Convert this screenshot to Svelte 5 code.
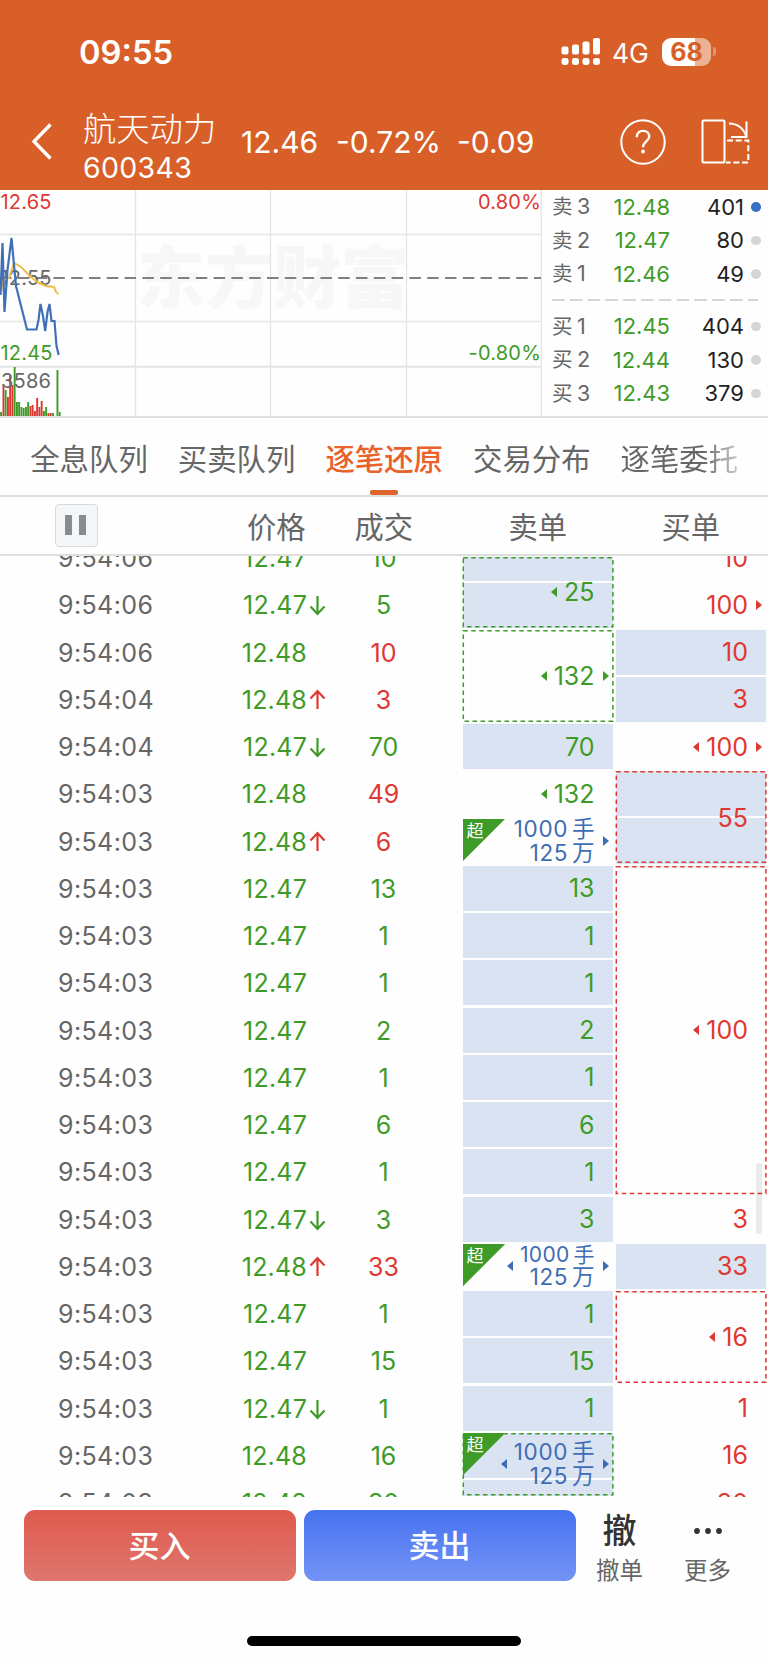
<script>
  const asks = [
    { name: "卖3", price: "12.48", vol: 401, hot: true },
    { name: "卖2", price: "12.47", vol: 80 },
    { name: "卖1", price: "12.46", vol: 49 },
  ];
  const bids = [
    { name: "买1", price: "12.45", vol: 404 },
    { name: "买2", price: "12.44", vol: 130 },
    { name: "买3", price: "12.43", vol: 379 },
  ];

  const tabs = ["全息队列", "买卖队列", "逐笔还原", "交易分布", "逐笔委托"];
  let active = 2;
  let paused = false;

  // time, price, direction, volume, side
  const ticks = [
    ["9:54:06", "12.47", "", 10, "s"],
    ["9:54:06", "12.47", "down", 5, "s"],
    ["9:54:06", "12.48", "", 10, "b"],
    ["9:54:04", "12.48", "up", 3, "b"],
    ["9:54:04", "12.47", "down", 70, "s"],
    ["9:54:03", "12.48", "", 49, "b"],
    ["9:54:03", "12.48", "up", 6, "b"],
    ["9:54:03", "12.47", "", 13, "s"],
    ["9:54:03", "12.47", "", 1, "s"],
    ["9:54:03", "12.47", "", 1, "s"],
    ["9:54:03", "12.47", "", 2, "s"],
    ["9:54:03", "12.47", "", 1, "s"],
    ["9:54:03", "12.47", "", 6, "s"],
    ["9:54:03", "12.47", "", 1, "s"],
    ["9:54:03", "12.47", "down", 3, "s"],
    ["9:54:03", "12.48", "up", 33, "b"],
    ["9:54:03", "12.47", "", 1, "s"],
    ["9:54:03", "12.47", "", 15, "s"],
    ["9:54:03", "12.47", "down", 1, "s"],
    ["9:54:03", "12.48", "", 16, "s"],
    ["9:54:03", "12.48", "", 30, "s"],
  ];

  // an order may span several ticks; l / r mark that it continues before / after
  const sells = [
    { span: 2, text: 25, fill: true, box: true, l: true, cut: "top" },
    { span: 2, text: 132, box: true, l: true, r: true },
    { span: 1, text: 70, fill: true },
    { span: 1, text: 132, l: true },
    { span: 1, big: true, r: true },
    { span: 1, text: 13, fill: true },
    { span: 1, text: 1, fill: true },
    { span: 1, text: 1, fill: true },
    { span: 1, text: 2, fill: true },
    { span: 1, text: 1, fill: true },
    { span: 1, text: 6, fill: true },
    { span: 1, text: 1, fill: true },
    { span: 1, text: 3, fill: true },
    { span: 1, big: true, l: true, r: true, tight: true },
    { span: 1, text: 1, fill: true },
    { span: 1, text: 15, fill: true },
    { span: 1, text: 1, fill: true },
    { span: 2, big: true, fill: true, box: true, l: true, r: true, cut: "bottom" },
  ];
  const buys = [
    { span: 1, text: 10 },
    { span: 1, text: 100, r: true },
    { span: 1, text: 10, fill: true },
    { span: 1, text: 3, fill: true },
    { span: 1, text: 100, l: true, r: true },
    { span: 2, text: 55, fill: true, box: true },
    { span: 7, text: 100, box: true, l: true },
    { span: 1, text: 3 },
    { span: 1, text: 33, fill: true },
    { span: 2, text: 16, box: true, l: true },
    { span: 1, text: 1 },
    { span: 1, text: 16 },
    { span: 1, text: 30 },
  ];

  const bars = [
    [1, 4, "s"], [3.4, 31, "b"], [5.6, 26, "s"], [7.9, 19, "b"], [10.1, 40, "b"],
    [12.4, 31, "b"], [14.6, 49, "s"], [16.9, 14, "s"], [19.1, 14, "s"], [21.4, 9, "s"],
    [23.6, 8, "s"], [25.9, 9, "s"], [28.1, 14, "s"], [30.4, 10, "b"], [32.6, 11, "b"],
    [34.9, 5, "b"], [37.1, 18, "b"], [39.4, 9, "b"], [41.6, 15, "b"], [43.9, 5, "s"],
    [46.1, 9, "s"], [48.4, 3, "b"], [50.6, 3, "b"], [52.9, 3, "s"], [57.4, 46, "s"], [59.6, 4, "s"],
  ];
</script>

<div class="phone">
  <header>
    <div class="status">
      <span class="clock">09:55</span>
      <svg class="signal" width="40" height="28" viewBox="0 0 40 28" fill="#fff">
        <rect x="0.5" y="8.5" width="7" height="8" rx="2" />
        <rect x="11" y="6.5" width="7" height="10" rx="2" />
        <rect x="21.5" y="3.5" width="7" height="13" rx="2" />
        <rect x="32" y="0" width="7" height="16.5" rx="2" />
        <rect x="0.5" y="20" width="7" height="7" rx="2.4" />
        <rect x="11" y="20" width="7" height="7" rx="2.4" />
        <rect x="21.5" y="20" width="7" height="7" rx="2.4" />
        <rect x="32" y="20" width="7" height="7" rx="2.4" />
      </svg>
      <span class="net">4G</span>
      <span class="battery">68</span>
      <i class="nub"></i>
    </div>
    <div class="nav">
      <svg class="back" width="24" height="40" viewBox="0 0 24 40" fill="none" stroke="#fff" stroke-width="3.4">
        <path d="M20.500 2.500 4 19.500l16.500 17" />
      </svg>
      <div class="stock">
        <div class="name">航天动力</div>
        <div class="code">600343</div>
      </div>
      <span class="q1">12.46</span>
      <span class="q2">-0.72%</span>
      <span class="q3">-0.09</span>
      <svg class="help" width="48" height="48" viewBox="0 0 48 48" fill="none" stroke="#fff" stroke-width="2">
        <circle cx="24" cy="24" r="21.700" />
        <path d="M17.700 19.200c0-3.900 2.600-6.300 6.300-6.300s6.200 2.200 6.200 5.500c0 4.900-6.200 5-6.200 10.800" stroke-width="2.400" />
        <circle cx="24" cy="33.500" r="1.900" fill="#fff" stroke="none" />
      </svg>
      <svg class="rotate" width="50" height="46" viewBox="0 0 50 46" fill="none" stroke="#fff" stroke-width="2">
        <rect x="1.500" y="1.500" width="22" height="42" rx="1" />
        <path d="M28 4.500c8.500 0 15 5 17 12.500M45.500 2.500v15.500H30" />
        <path d="M26 21.500h21.300v22H25" stroke-dasharray="6 2.700" />
      </svg>
    </div>
  </header>

  <section class="quote">
    <svg class="chart" width="542" height="228" viewBox="0 190 542 228">
      <text class="mark" x="137" y="303">东方财富</text>
      <g stroke="#e3e5e8" stroke-width="1.300" fill="none">
        <path d="M135.500 190v227M270.500 190v227M406.500 190v227M541.300 190v227" />
        <path d="M0 234.500h541M0 321.500h541" />
        <path d="M0 366.800h541" stroke-width="2" />
      </g>
      <path d="M0 278H541" stroke="#808080" stroke-width="1.800" stroke-dasharray="11.500 6.300" />
      {#each bars as [x, h, side]}
        <rect x={x - 0.9} y={416 - h} width="1.900" height={h} fill={side === "b" ? "#df3832" : "#3f9b28"} />
      {/each}
      <g class="labels">
        <text x="0.500" y="284.500">12.55</text>
        <text x="1" y="388">3586</text>
        <text x="0.500" y="208.500" fill="#df3832">12.65</text>
        <text x="0.500" y="359.500" fill="#3f9b28">12.45</text>
        <text x="541" y="208.500" fill="#df3832" text-anchor="end">0.80%</text>
        <text x="541" y="359.500" fill="#3f9b28" text-anchor="end">-0.80%</text>
      </g>
      <path d="M1 292 3 280 9 278 14 263 21 267 32 278 39 283 46 286 54 287 56 292 58.500 294" fill="none" stroke="#eebd45" stroke-width="2" />
      <path d="M0.500 295 2.500 243 4.500 312 7.500 270 11.500 238 14.500 270 16 286 27 329.500H36.500L38.500 320 40.500 304 43 316 45.200 331 47.500 312 49.500 304 51.500 321H54.500L56.500 346 58.700 355" fill="none" stroke="#4070b8" stroke-width="2.200" />
    </svg>
    <div class="book">
      {#each asks as o}
        <div class="level">
          <span class="lv">{o.name[0]}<b>{o.name[1]}</b></span><span class="pr">{o.price}</span><span class="vol">{o.vol}</span><i class:hot={o.hot}></i>
        </div>
      {/each}
      <svg class="split" width="206" height="2"><path d="M0 1h206" stroke="#d6d6d6" stroke-width="2" stroke-dasharray="12.500 5.300" /></svg>
      {#each bids as o}
        <div class="level">
          <span class="lv">{o.name[0]}<b>{o.name[1]}</b></span><span class="pr">{o.price}</span><span class="vol">{o.vol}</span><i></i>
        </div>
      {/each}
    </div>
  </section>

  <nav class="tabs">
    {#each tabs as tab, i}
      <button class:active={active === i} on:click={() => (active = i)}>{tab}</button>
    {/each}
  </nav>

  <div class="thead">
    <button class="pause" aria-label="暂停" on:click={() => (paused = !paused)}><i></i><i></i></button>
    <span class="h1">价格</span>
    <span class="h2">成交</span>
    <span class="h3">卖单</span>
    <span class="h4">买单</span>
  </div>

  <div class="list">
    <div class="ticks">
      {#each ticks as [time, price, dir, vol, side]}
        <div class="tick">
          <span class="time">{time}</span>
          <span class="price">{price}</span>
          <span class="dir">
            {#if dir}
              <svg class={dir} width="17" height="22" viewBox="0 0 17 22" fill="none" stroke-width="2.200">
                <path d="M8.500 2v18M1.500 9.500 8.500 2l7 7.500" />
              </svg>
            {/if}
          </span>
          <span class="qty {side}">{vol}</span>
        </div>
      {/each}
    </div>
    {#each [sells, buys] as orders, c}
      <div class="orders {c ? 'b' : 's'}">
        {#each orders as o}
          <div class="cell {o.cut ?? ''}" class:fill={o.fill} style="grid-row: span {o.span}">
            {#if o.big}<span class="super"><em>超</em></span>{/if}
            {#if o.box}
              <svg class="frame" width="100%" height="100%">
                <rect x="0.300" y="0.700" width="149.600" height="100%" fill="none" />
              </svg>
            {/if}
            {#if o.l}<i class="left" class:blue={o.big}></i>{/if}
            {#if o.big}
              <span class="big" class:tight={o.tight}><span>1000<u>手</u></span><span>125<u>万</u></span></span>
            {:else}
              <span class="num">{o.text}</span>
            {/if}
            <i class="right" class:blue={o.big} class:off={!o.r}></i>
          </div>
        {/each}
      </div>
    {/each}
    <div class="scroll"></div>
  </div>

  <footer>
    <button class="buy">买入</button>
    <button class="sell">卖出</button>
    <div class="tool">
      <span class="glyph">撤</span>
      <span>撤单</span>
    </div>
    <div class="tool more">
      <span class="glyph"><svg width="30" height="6" fill="#333"><circle cx="4" cy="3" r="2.900" /><circle cx="15" cy="3" r="2.900" /><circle cx="26" cy="3" r="2.900" /></svg></span>
      <span>更多</span>
    </div>
  </footer>
  <div class="home"></div>
</div>

<style>
  :global(body) {
    margin: 0;
    background: #fff;
  }
  .phone {
    width: 768px;
    height: 1663px;
    overflow: hidden;
    display: flex;
    flex-direction: column;
    background: #fefefe;
    color: #666;
    font-family: Inter, "Noto Sans CJK SC", sans-serif;
  }
  .phone * {
    box-sizing: border-box;
  }
  button {
    font: inherit;
    color: inherit;
    border: 0;
    padding: 0;
    background: none;
    white-space: nowrap;
  }
  header {
    flex: none;
    height: 190px;
    background: #d86028;
    color: #fff;
  }
  .status {
    height: 103px;
    display: flex;
    align-items: center;
    padding-left: 79px;
  }
  .clock {
    width: 482px;
    font-size: 32.700px;
    font-weight: 600;
  }
  .net {
    width: 61px;
    padding: 2px 0 0 11px;
    font-size: 26.500px;
  }
  .battery {
    width: 49px;
    height: 28px;
    line-height: 28px;
    border-radius: 9px;
    text-align: center;
    font-size: 25px;
    font-weight: 700;
    color: #d86028;
    background: linear-gradient(90deg, #fff 68%, #ebb294 68%);
  }
  .nub {
    width: 3px;
    height: 9px;
    margin-left: 2px;
    border-radius: 0 4px 4px 0;
    background: #e3946f;
  }
  .nav {
    height: 87px;
    padding-bottom: 10px;
    display: flex;
    align-items: center;
    font-size: 30px;
    white-space: nowrap;
  }
  .back {
    margin-left: 30px;
    margin-right: 29px;
  }
  .stock {
    width: 158px;
    padding-top: 12px;
  }
  .name {
    font-size: 33.300px;
    line-height: 40px;
    font-weight: 300;
  }
  .code {
    font-size: 28.500px;
    line-height: 38px;
    letter-spacing: 0.300px;
  }
  .q1 {
    width: 95px;
  }
  .q2 {
    width: 121px;
  }
  .q3 {
    width: 162px;
  }
  .rotate {
    margin-left: 34px;
  }

  .quote {
    flex: none;
    height: 228px;
    display: flex;
    border-bottom: 2px solid #dedfe0;
  }
  .chart {
    flex: none;
  }
  .mark {
    font-size: 68px;
    font-weight: 900;
    fill: #f7f7f7;
  }
  .labels {
    font-size: 20px;
    letter-spacing: 0.200px;
    fill: #666;
  }
  .book {
    flex: 1;
    padding-left: 10px;
    font-size: 22px;
  }
  .level {
    height: 33.500px;
    display: flex;
    align-items: center;
  }
  .lv {
    width: 41px;
    font-size: 20.500px;
    line-height: 24px;
    display: flex;
    align-items: baseline;
    justify-content: space-between;
  }
  .lv b {
    font-weight: 400;
    font-size: 21.500px;
    width: 16px;
  }
  .pr {
    width: 77px;
    text-align: right;
    color: #3f9b28;
  }
  .vol {
    width: 74px;
    text-align: right;
    color: #222;
  }
  .level i {
    width: 9.500px;
    height: 9.500px;
    margin-left: 7px;
    border-radius: 50%;
    background: #d6d6d8;
  }
  .level i.hot {
    background: #3b6fc4;
  }
  .split {
    display: block;
    margin: 8px 0 9px;
  }

  .tabs {
    flex: none;
    height: 78.500px;
    display: flex;
    gap: 29.600px;
    padding-left: 30px;
    border-bottom: 2px solid #dfdfdf;
    font-size: 29.400px;
    overflow: hidden;
  }
  .tabs button {
    width: 118px;
    flex: none;
    display: flex;
    flex-direction: column;
    align-items: center;
    line-height: 83px;
  }
  .tabs button.active {
    color: #e8622a;
    font-weight: 500;
  }
  .tabs button.active::after {
    content: "";
    width: 28px;
    height: 5px;
    margin-top: -11px;
    border-radius: 2px;
    background: #e0632c;
  }
  .tabs button:last-child {
    color: transparent;
    background: linear-gradient(90deg, #666 70%, #ccc);
    background-clip: text;
  }
  .thead {
    flex: none;
    height: 59px;
    display: flex;
    align-items: center;
    border-bottom: 2px solid #dfdfdf;
    font-size: 29.300px;
  }
  .pause {
    width: 43px;
    height: 43px;
    margin-left: 55px;
    padding-right: 2px;
    display: flex;
    align-items: center;
    justify-content: center;
    gap: 7.500px;
    border: 1.500px solid #d8dadd;
    border-radius: 4px;
    background: #f5f6f8;
  }
  .pause i {
    width: 6.500px;
    height: 20px;
    background: #8a8b8e;
  }
  .h1 {
    margin-left: 149px;
    width: 107.500px;
  }
  .h2 {
    width: 154px;
  }
  .h3 {
    width: 153px;
  }

  .list {
    flex: none;
    height: 941px;
    overflow: hidden;
    display: flex;
    font-size: 25px;
    position: relative;
  }
  .ticks,
  .orders {
    flex: none;
    margin-top: -21.500px;
  }
  .ticks {
    width: 462.500px;
  }
  .tick {
    height: 47.250px;
    padding-top: 1px;
    display: flex;
    align-items: center;
  }
  .time {
    width: 153px;
    padding-left: 58px;
    box-sizing: content-box;
    letter-spacing: 0.400px;
  }
  .price {
    width: 96px;
    text-align: right;
    color: #3f9b28;
    letter-spacing: 0.200px;
  }
  .dir {
    width: 36px;
    padding-left: 1.500px;
    display: flex;
  }
  .dir svg {
    stroke: #df3832;
  }
  .dir .down {
    stroke: #3f9b28;
    transform: rotate(180deg);
  }
  .qty {
    width: 81px;
    text-align: center;
  }
  .s {
    color: #3f9b28;
  }
  .b {
    color: #df3832;
  }
  .orders {
    width: 150px;
    margin-right: 3.500px;
    display: grid;
    grid-auto-rows: 47.250px;
  }
  .orders.b {
    margin-right: 0;
  }
  .cell {
    position: relative;
    display: flex;
    align-items: center;
    justify-content: flex-end;
    margin: 1px 0;
  }
  .cell.fill {
    background: repeating-linear-gradient(#d9e3f1 0 45.250px, #fff 45.250px 47.250px);
  }
  .cell.top {
    margin-top: 22.500px;
    background: linear-gradient(#d9e3f1 23.700px, #fff 23.700px 25.700px, #d9e3f1 25.700px);
  }
  .cell.bottom {
    margin-bottom: 30.500px;
  }
  /* dashed outline lies over the row stripes */
  .frame {
    position: absolute;
    inset: 0;
    overflow: visible;
  }
  .frame rect {
    height: calc(100% - 2px);
    stroke: currentColor;
    stroke-width: 1.500;
    stroke-dasharray: 4.500 3.500;
  }
  .cell i {
    border: solid transparent;
    border-width: 5px 0;
  }
  .left {
    border-right: 6.500px solid currentColor !important;
    margin-right: 7px;
  }
  .right {
    border-left: 6.500px solid currentColor !important;
    margin: 0 4px 0 8px;
  }
  .off {
    visibility: hidden;
  }
  .blue,
  .big {
    color: #3f6db5;
  }
  .big {
    display: flex;
    flex-direction: column;
    align-items: flex-end;
    font-size: 22.500px;
    line-height: 24px;
    letter-spacing: 0.600px;
  }
  .big span {
    display: flex;
    align-items: center;
  }
  .big u {
    text-decoration: none;
    margin-left: 4px;
    letter-spacing: 0;
  }
  .tight {
    line-height: 22.500px;
  }
  .tight span:first-child {
    font-size: 21px;
    letter-spacing: 0.300px;
  }
  .super {
    position: absolute;
    left: 0;
    top: 0;
    width: 43px;
    height: 43px;
    background: #3f9b28;
    clip-path: polygon(0 0, 100% 0, 0 100%);
  }
  .super em {
    display: block;
    padding-left: 4px;
    font-style: normal;
    font-size: 17px;
    line-height: 25px;
    color: #fff;
  }
  .scroll {
    position: absolute;
    right: 6px;
    top: 607px;
    width: 6px;
    height: 71px;
    border-radius: 3px;
    background: rgba(0, 0, 0, 0.08);
  }

  footer {
    flex: none;
    height: 139px;
    display: flex;
    gap: 8px;
    padding: 13.500px 0 0 24px;
  }
  .buy,
  .sell {
    width: 272px;
    height: 71px;
    padding: 0 1px 4px 0;
    border-radius: 11px;
    color: #fff;
    font-size: 31px;
    font-weight: 500;
    background: linear-gradient(#e05a4e, #de766d);
  }
  .sell {
    background: linear-gradient(#4773f0, #7493f6);
  }
  .tool {
    width: 47px;
    margin-left: 12px;
    display: flex;
    flex-direction: column;
    align-items: center;
    font-size: 23.500px;
    line-height: 38px;
    white-space: nowrap;
  }
  .more {
    margin-left: 33px;
  }
  .glyph {
    height: 42px;
    display: flex;
    align-items: center;
    color: #333;
    font-size: 34px;
    font-weight: 500;
  }
  .home {
    width: 274px;
    height: 10px;
    align-self: center;
    border-radius: 5px;
    background: #000;
  }
</style>
